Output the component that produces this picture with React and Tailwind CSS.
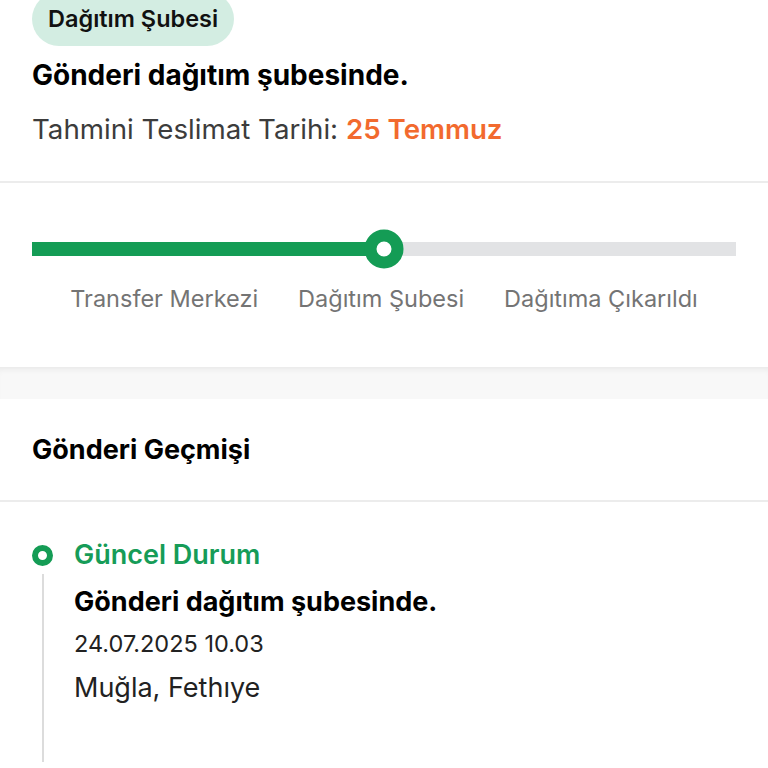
import React from 'react';

const steps = ['Transfer Merkezi', 'Dağıtım Şubesi', 'Dağıtıma Çıkarıldı'];

export default function App() {
  return (
    <div className="min-h-[768px] bg-white font-['Inter',sans-serif] text-black overflow-hidden">
      {/* summary */}
      <div className="px-8 pb-[34px]">
        <div className="-mt-[8px] inline-flex h-[54px] items-center rounded-full bg-[#d3ede2] px-[16px] text-[23.5px] font-semibold text-[#111]">
          Dağıtım Şubesi
        </div>
        <div className="mt-[11px] text-[28px] font-bold leading-[36px]">Gönderi dağıtım şubesinde.</div>
        <div className="mt-[18px] text-[27.7px] leading-[36px] text-[#3c3c3c]">
          Tahmini Teslimat Tarihi: <span className="font-semibold text-[#f26a2e]">25 Temmuz</span>
        </div>
      </div>
      <div className="h-[2px] bg-[#ececec]" />

      {/* progress */}
      <div className="px-8 pt-[59px] pb-[53px]">
        <div className="relative h-[14px] bg-[#e2e3e5]">
          <div className="h-full w-[50%] bg-[#149c55]" />
          <div className="absolute left-[50%] top-1/2 h-[39px] w-[39px] -translate-x-1/2 -translate-y-1/2 rounded-full border-[12px] border-[#149c55] bg-white" />
        </div>
        <div className="mt-[28px] flex justify-center gap-[40px] text-[23.5px] leading-[30px] text-[#747474]">
          {steps.map(s => (
            <span key={s}>{s}</span>
          ))}
        </div>
      </div>
      <div className="h-[32px] bg-[#f8f8f8] shadow-[inset_0_6px_6px_-4px_rgba(0,0,0,0.07)]" />

      {/* history */}
      <div className="px-8 pt-[33px] pb-[32px] text-[27px] font-bold leading-[36px]">Gönderi Geçmişi</div>
      <div className="h-[2px] bg-[#ececec]" />

      <div className="flex px-8 pt-[43px]">
        <div className="flex w-[21px] flex-col items-center">
          <div className="h-[21px] w-[21px] rounded-full border-[6px] border-[#149c55] bg-white" />
          <div className="mt-[8px] h-[188px] w-[2px] bg-[#dcdcdc]" />
        </div>
        <div className="ml-[21px] -mt-[8px]">
          <div className="text-[27px] font-semibold leading-[36px] text-[#169c58]">Güncel Durum</div>
          <div className="mt-[11px] text-[27px] font-bold leading-[36px]">Gönderi dağıtım şubesinde.</div>
          <div className="mt-[9px] text-[23.5px] leading-[30px] text-[#222]">24.07.2025 10.03</div>
          <div className="mt-[11px] text-[27px] leading-[36px] text-[#222]">Muğla, Fethıye</div>
        </div>
      </div>
    </div>
  );
}
